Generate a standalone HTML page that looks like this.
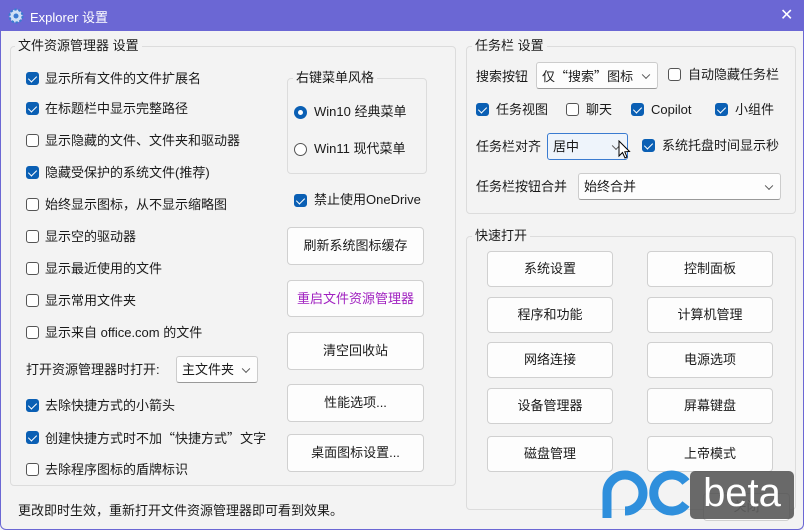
<!DOCTYPE html><html><head><meta charset="utf-8"><style>
*{box-sizing:border-box;margin:0;padding:0}
body{width:804px;height:530px;overflow:hidden;background:#f3f3f3;font-family:"Liberation Sans","Noto Sans CJK SC",sans-serif;font-size:13px;color:#1a1a1a;position:relative}
.a{position:absolute;white-space:nowrap}
.q{font-family:"Noto Sans CJK SC",sans-serif}
.title{left:0;top:0;width:804px;height:31px;background:#6b67d4;color:#fff}
.frame{left:0;top:31px;width:804px;height:499px;border:1px solid #6b67d4;border-top:none;border-radius:0 0 6px 6px}
.grp{position:absolute;border:1px solid #dcdcdc;border-radius:4px}
.gl{position:absolute;background:#f3f3f3;padding:0 3px;line-height:16px}
.cb{position:absolute;width:13px;height:13px;border-radius:3px;border:1px solid #555;background:#fff}
.cb.on{background:#0a5fb4;border-color:#0a5fb4}
.cb.on::after{content:"";position:absolute;left:3px;top:1px;width:4px;height:7px;border:solid #fff;border-width:0 1.3px 1.3px 0;transform:rotate(45deg)}
.t{position:absolute;line-height:16px;white-space:nowrap}
.btn{position:absolute;background:#fdfdfd;border:1px solid #d0d0d0;border-radius:4px;text-align:center;white-space:nowrap}
.cmb{position:absolute;background:#fdfdfd;border:1px solid #ccc;border-bottom-color:#999;border-radius:3px;padding-left:5px;white-space:nowrap}
.chev{position:absolute;right:8px;top:50%;width:6px;height:6px;border:solid #555;border-width:0 1px 1px 0;transform:translateY(-70%) rotate(45deg)}
</style></head><body>
<div class="a title">
<svg style="position:absolute;left:8px;top:8px" width="16" height="16" viewBox="0 0 16 16"><circle cx="8" cy="8" r="6.5" fill="#cfe0f5" stroke="#3a7bd0" stroke-width="2" stroke-dasharray="2.5 1.6"/><circle cx="8" cy="8" r="2.5" fill="#3a7bd0"/></svg>
<span class="a" style="left:30px;top:7px;font-size:13px">Explorer 设置</span>
<span class="a" style="left:780px;top:5px;font-size:16px">✕</span>
</div>
<div class="a frame"></div>

<div class="grp" style="left:10px;top:46px;width:446px;height:440px"></div>
<div class="gl" style="left:15px;top:38px">文件资源管理器 设置</div>

<div class="cb on" style="left:26px;top:72px"></div><div class="t" style="left:45px;top:71px">显示所有文件的文件扩展名</div>
<div class="cb on" style="left:26px;top:102px"></div><div class="t" style="left:45px;top:101px">在标题栏中显示完整路径</div>
<div class="cb" style="left:26px;top:134px"></div><div class="t" style="left:45px;top:133px">显示隐藏的文件、文件夹和驱动器</div>
<div class="cb on" style="left:26px;top:166px"></div><div class="t" style="left:45px;top:165px">隐藏受保护的系统文件(推荐)</div>
<div class="cb" style="left:26px;top:198px"></div><div class="t" style="left:45px;top:197px">始终显示图标，从不显示缩略图</div>
<div class="cb" style="left:26px;top:230px"></div><div class="t" style="left:45px;top:229px">显示空的驱动器</div>
<div class="cb" style="left:26px;top:262px"></div><div class="t" style="left:45px;top:261px">显示最近使用的文件</div>
<div class="cb" style="left:26px;top:294px"></div><div class="t" style="left:45px;top:293px">显示常用文件夹</div>
<div class="cb" style="left:26px;top:326px"></div><div class="t" style="left:45px;top:325px">显示来自 office.com 的文件</div>
<div class="t" style="left:26px;top:362px">打开资源管理器时打开:</div>
<div class="cmb" style="left:176px;top:356px;width:82px;height:27px;line-height:25px">主文件夹<div class="chev"></div></div>
<div class="cb on" style="left:26px;top:399px"></div><div class="t" style="left:45px;top:398px">去除快捷方式的小箭头</div>
<div class="cb on" style="left:26px;top:431px"></div><div class="t" style="left:45px;top:430px">创建快捷方式时不加<span class="q">“</span>快捷方式<span class="q">”</span>文字</div>
<div class="cb" style="left:26px;top:463px"></div><div class="t" style="left:45px;top:462px">去除程序图标的盾牌标识</div>

<div class="grp" style="left:287px;top:78px;width:140px;height:96px"></div>
<div class="gl" style="left:293px;top:70px">右键菜单风格</div>
<div class="a" style="left:294px;top:106px;width:13px;height:13px;border-radius:50%;background:#0a5fb4"><div style="position:absolute;left:4px;top:4px;width:5px;height:5px;border-radius:50%;background:#fff"></div></div>
<div class="t" style="left:314px;top:104px">Win10 经典菜单</div>
<div class="a" style="left:294px;top:143px;width:13px;height:13px;border-radius:50%;border:1px solid #555;background:#fff"></div>
<div class="t" style="left:314px;top:141px">Win11 现代菜单</div>
<div class="cb on" style="left:294px;top:194px"></div><div class="t" style="left:314px;top:192px">禁止使用OneDrive</div>

<div class="btn" style="left:287px;top:227px;width:137px;height:38px;line-height:36px">刷新系统图标缓存</div>
<div class="btn" style="left:287px;top:280px;width:137px;height:37px;line-height:35px;color:#a020c0">重启文件资源管理器</div>
<div class="btn" style="left:287px;top:332px;width:137px;height:38px;line-height:36px">清空回收站</div>
<div class="btn" style="left:287px;top:384px;width:137px;height:38px;line-height:36px">性能选项...</div>
<div class="btn" style="left:287px;top:434px;width:137px;height:38px;line-height:36px">桌面图标设置...</div>

<div class="grp" style="left:466px;top:46px;width:330px;height:168px"></div>
<div class="gl" style="left:472px;top:38px">任务栏 设置</div>
<div class="t" style="left:476px;top:69px">搜索按钮</div>
<div class="cmb" style="left:536px;top:62px;width:122px;height:27px;line-height:25px">仅<span class="q">“</span>搜索<span class="q">”</span>图标<div class="chev"></div></div>
<div class="cb" style="left:668px;top:68px"></div><div class="t" style="left:688px;top:67px">自动隐藏任务栏</div>
<div class="cb on" style="left:476px;top:103px"></div><div class="t" style="left:496px;top:102px">任务视图</div>
<div class="cb" style="left:566px;top:103px"></div><div class="t" style="left:586px;top:102px">聊天</div>
<div class="cb on" style="left:631px;top:103px"></div><div class="t" style="left:651px;top:102px">Copilot</div>
<div class="cb on" style="left:715px;top:103px"></div><div class="t" style="left:735px;top:102px">小组件</div>
<div class="t" style="left:476px;top:139px">任务栏对齐</div>
<div class="cmb" style="left:547px;top:133px;width:81px;height:27px;line-height:25px;background:#eef4fb;border-color:#3a7bd0">居中<div class="chev"></div></div>
<svg style="position:absolute;left:618px;top:140px" width="14" height="20" viewBox="0 0 14 20"><path d="M1 1 L1 16 L4.5 12.5 L7 18 L9 17 L6.8 11.8 L11.5 11.5 Z" fill="#fff" stroke="#000" stroke-width="1"/></svg>
<div class="cb on" style="left:642px;top:139px"></div><div class="t" style="left:662px;top:138px">系统托盘时间显示秒</div>
<div class="t" style="left:476px;top:179px">任务栏按钮合并</div>
<div class="cmb" style="left:578px;top:173px;width:203px;height:27px;line-height:25px">始终合并<div class="chev"></div></div>

<div class="grp" style="left:466px;top:236px;width:330px;height:274px"></div>
<div class="gl" style="left:472px;top:228px">快速打开</div>
<div class="btn" style="left:487px;top:251px;width:126px;height:36px;line-height:34px">系统设置</div>
<div class="btn" style="left:647px;top:251px;width:126px;height:36px;line-height:34px">控制面板</div>
<div class="btn" style="left:487px;top:297px;width:126px;height:36px;line-height:34px">程序和功能</div>
<div class="btn" style="left:647px;top:297px;width:126px;height:36px;line-height:34px">计算机管理</div>
<div class="btn" style="left:487px;top:342px;width:126px;height:36px;line-height:34px">网络连接</div>
<div class="btn" style="left:647px;top:342px;width:126px;height:36px;line-height:34px">电源选项</div>
<div class="btn" style="left:487px;top:388px;width:126px;height:36px;line-height:34px">设备管理器</div>
<div class="btn" style="left:647px;top:388px;width:126px;height:36px;line-height:34px">屏幕键盘</div>
<div class="btn" style="left:487px;top:436px;width:126px;height:36px;line-height:34px">磁盘管理</div>
<div class="btn" style="left:647px;top:436px;width:126px;height:36px;line-height:34px">上帝模式</div>

<div class="t" style="left:18px;top:503px">更改即时生效，重新打开文件资源管理器即可看到效果。</div>
<div class="btn" style="left:703px;top:493px;width:87px;height:28px;line-height:26px;color:#888">关闭</div>

<svg style="position:absolute;left:600px;top:468px" width="92" height="55" viewBox="0 0 92 55">
<path d="M7 50 V25 A18 18 0 1 1 25 43" fill="none" stroke="#2f8fdc" stroke-width="9"/>
<path d="M86 14 A18 18 0 1 0 86 36" fill="none" stroke="#2f8fdc" stroke-width="9"/>
</svg>
<div class="a" style="left:690px;top:471px;width:104px;height:48px;background:rgba(80,80,80,0.85);border-radius:5px;color:#fff;font-size:40px;line-height:44px;text-align:center;font-weight:300">beta</div>
</body></html>
